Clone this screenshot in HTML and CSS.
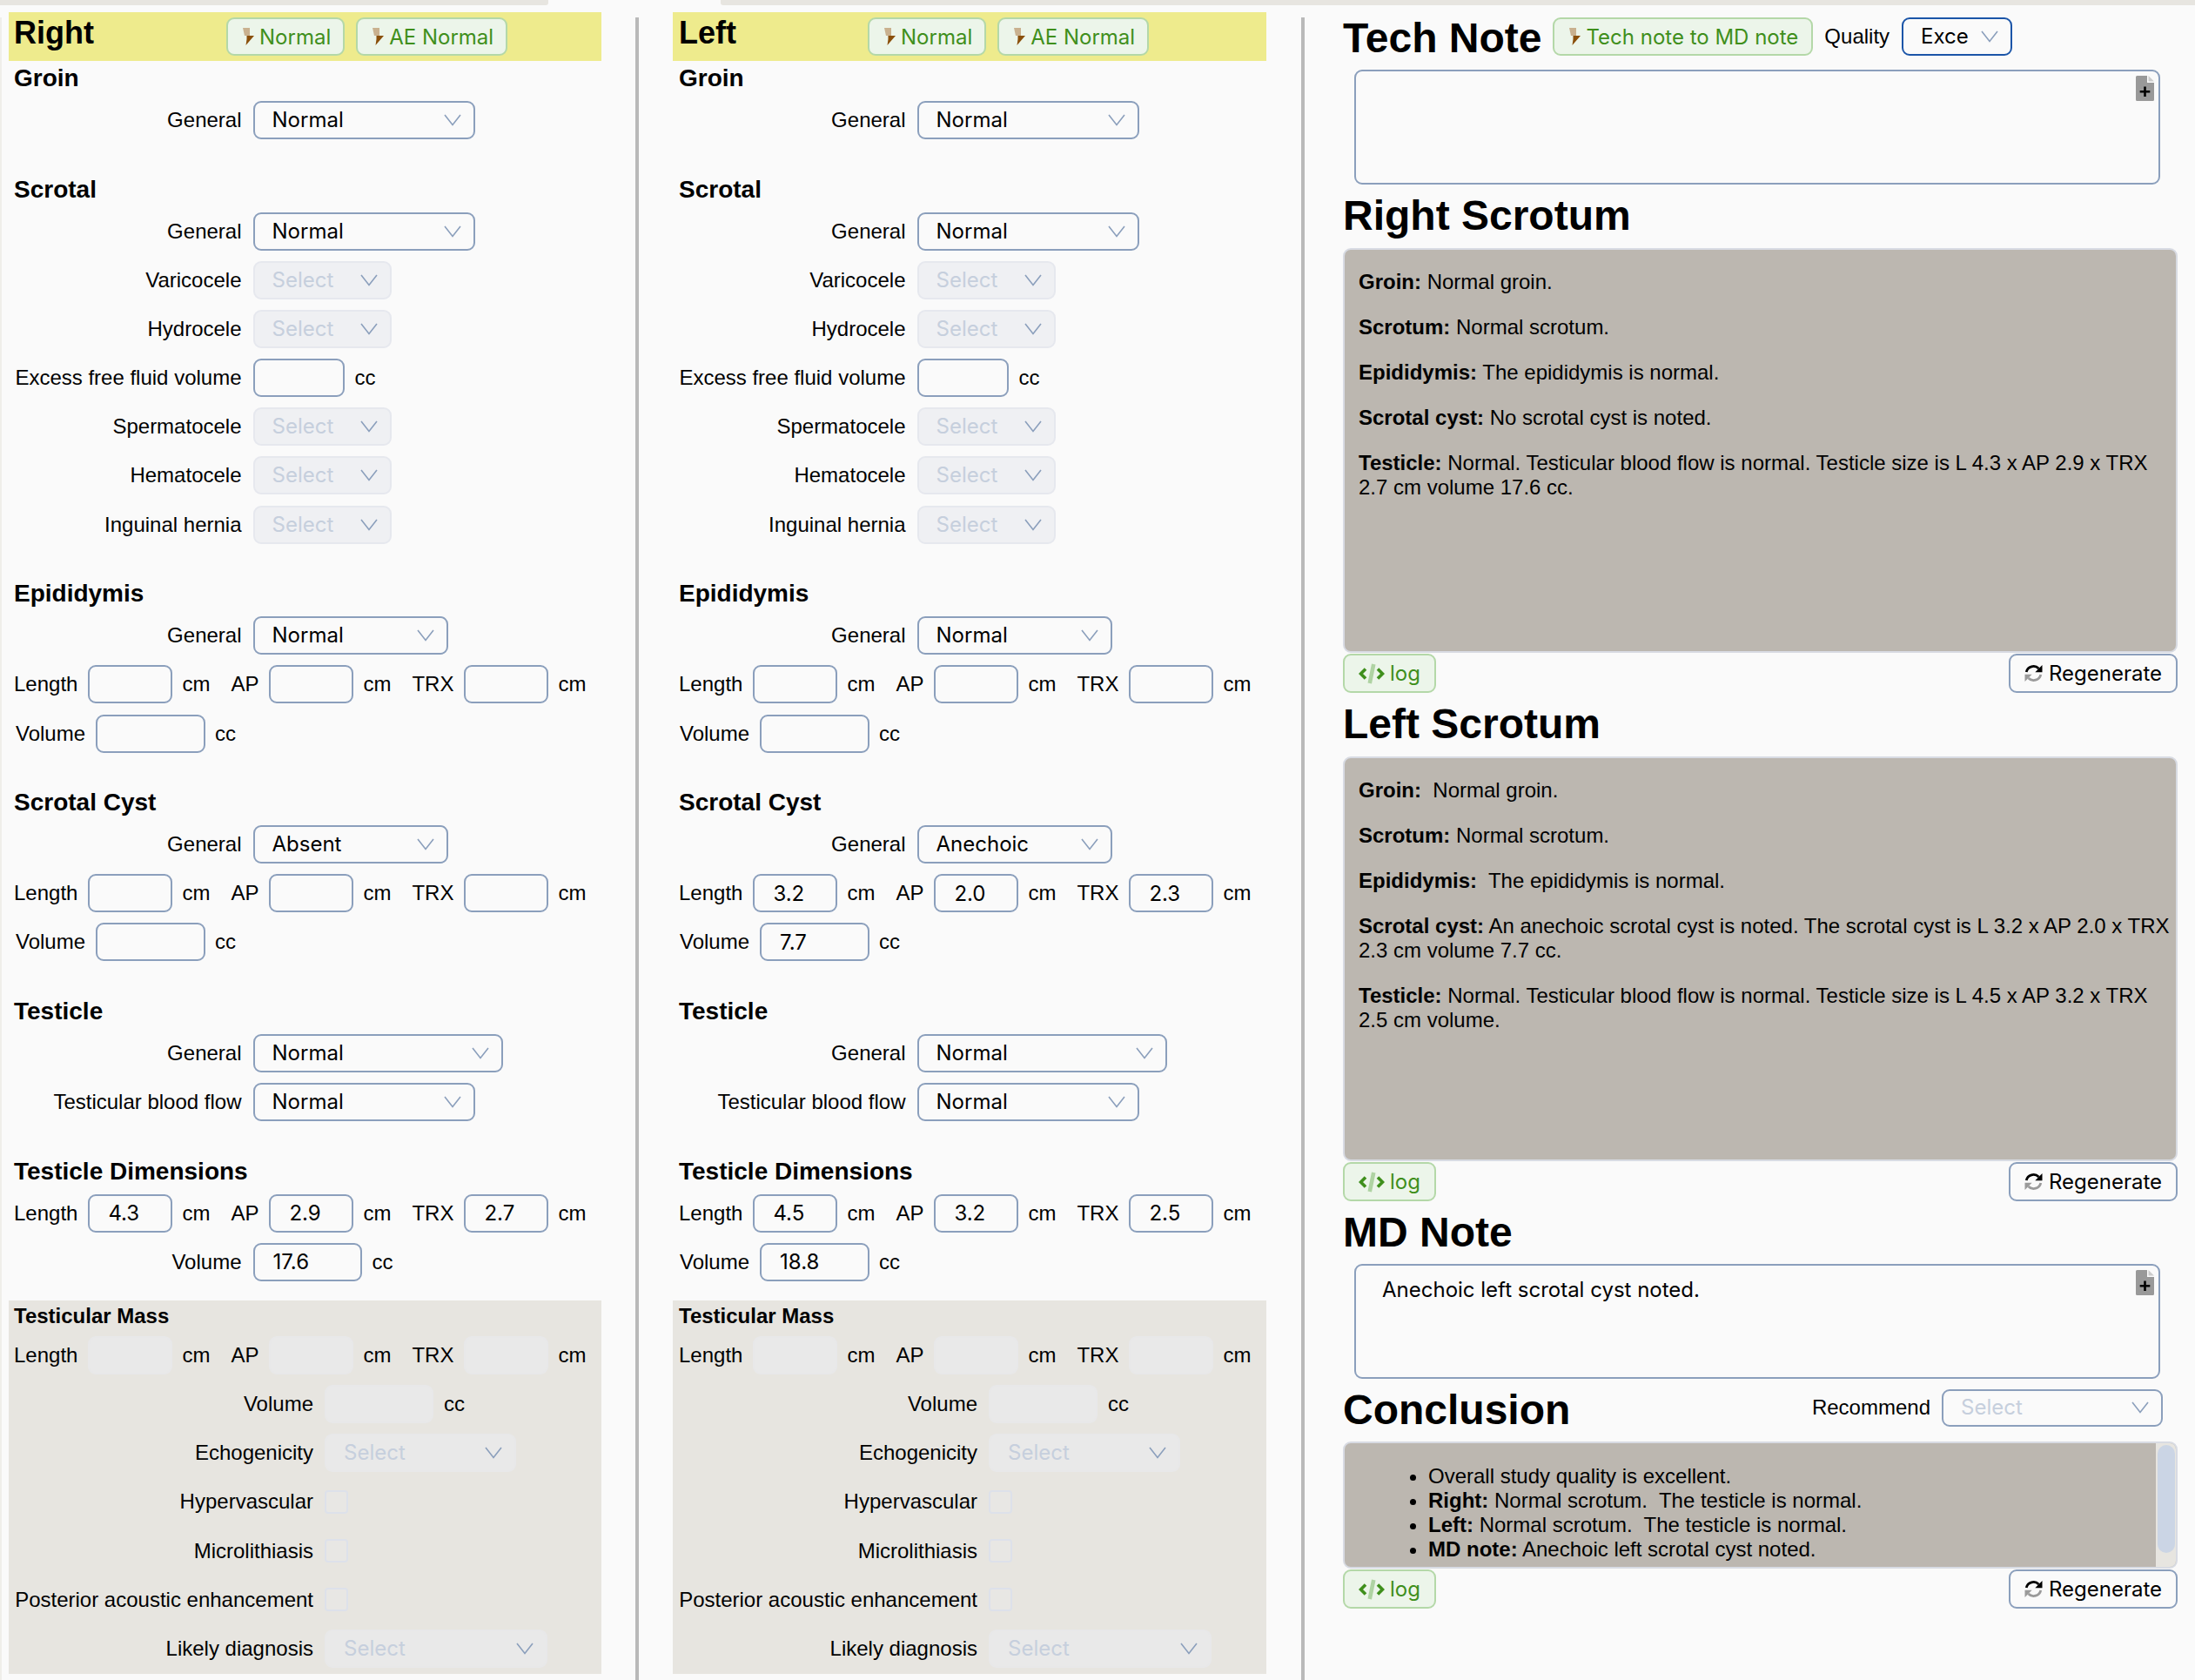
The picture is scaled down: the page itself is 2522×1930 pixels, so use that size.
FILE: index.html
```html
<!DOCTYPE html>
<html lang="en">
<head>
<meta charset="utf-8">
<title>Scrotal ultrasound report</title>
<link rel="stylesheet" href="styles.css">
</head>
<body>
<svg class="defs" width="0" height="0" aria-hidden="true">
  <symbol id="chev" viewBox="0 0 20 14"><path d="M1 1 L10 12.5 L19 1" fill="none" stroke="currentColor" stroke-width="1.6"/></symbol>
  <symbol id="bolt" viewBox="0 0 14 20"><path d="M1 0H9V9H3Z" fill="#c9b18f"/><path d="M5.5 9H14L4.5 20L5.5 13Z" fill="#8a4f0a"/></symbol>
  <symbol id="code" viewBox="0 0 30 24">
    <path d="M12.5 0.5L17 1.5L12.5 23.5L8 22.5Z" transform="translate(2.5 0)" fill="#afd3a3"/>
    <path d="M8 6.5L2.5 12L8 17.5" fill="none" stroke="#3f8f1c" stroke-width="3.6"/>
    <path d="M22 6.5L27.5 12L22 17.5" fill="none" stroke="#3f8f1c" stroke-width="3.6"/>
  </symbol>
  <symbol id="sync" viewBox="0 0 21 21">
    <path d="M2.2 9A8.4 8.4 0 0 1 16.4 5" fill="none" stroke="#000" stroke-width="2.8"/>
    <path d="M20.5 1V9.2H12.3Z" fill="#000"/>
    <path d="M18.8 12A8.4 8.4 0 0 1 4.6 16" fill="none" stroke="#9a9a9a" stroke-width="2.8"/>
    <path d="M0.5 20V11.8H8.7Z" fill="#9a9a9a"/>
  </symbol>
  <symbol id="addfile" viewBox="0 0 21 29">
    <path d="M1.5 0H13V8H21V27.5A1.5 1.5 0 0 1 19.5 29H1.5A1.5 1.5 0 0 1 0 27.5V1.5A1.5 1.5 0 0 1 1.5 0Z" fill="#999"/>
    <path d="M14.5 0L21 6.5H14.5Z" fill="#ccc"/>
    <path d="M10.5 12.5V24M4.7 18.2H16.3" stroke="#000" stroke-width="2.6"/>
  </symbol>
</svg>

<div class="topbar"><div class="strip strip-a"></div><div class="strip strip-b"></div></div>

<main class="page">

<section class="side side-right">
  <header class="side-head">
    <h2 class="side-title">Right</h2>
    <div class="quick">
      <button class="btn btn-green"><svg class="ico-bolt"><use href="#bolt"/></svg>Normal</button>
      <button class="btn btn-green"><svg class="ico-bolt"><use href="#bolt"/></svg>AE Normal</button>
    </div>
  </header>

  <h3 class="sec first">Groin</h3>
  <div class="row"><span class="lab">General</span><div class="sel w255"><span>Normal</span><svg class="chev"><use href="#chev"/></svg></div></div>

  <h3 class="sec">Scrotal</h3>
  <div class="row"><span class="lab">General</span><div class="sel w255"><span>Normal</span><svg class="chev"><use href="#chev"/></svg></div></div>
  <div class="row"><span class="lab">Varicocele</span><div class="sel w158 off"><span>Select</span><svg class="chev"><use href="#chev"/></svg></div></div>
  <div class="row"><span class="lab">Hydrocele</span><div class="sel w158 off"><span>Select</span><svg class="chev"><use href="#chev"/></svg></div></div>
  <div class="row"><span class="lab">Excess free fluid volume</span><input class="inp w104" type="text"><span class="unit">cc</span></div>
  <div class="row"><span class="lab">Spermatocele</span><div class="sel w158 off"><span>Select</span><svg class="chev"><use href="#chev"/></svg></div></div>
  <div class="row"><span class="lab">Hematocele</span><div class="sel w158 off"><span>Select</span><svg class="chev"><use href="#chev"/></svg></div></div>
  <div class="row"><span class="lab">Inguinal hernia</span><div class="sel w158 off"><span>Select</span><svg class="chev"><use href="#chev"/></svg></div></div>

  <h3 class="sec">Epididymis</h3>
  <div class="row"><span class="lab">General</span><div class="sel w223"><span>Normal</span><svg class="chev"><use href="#chev"/></svg></div></div>
  <div class="row dims"><span>Length</span><input class="inp w97" type="text"><span class="unit">cm</span><span>AP</span><input class="inp w97" type="text"><span class="unit">cm</span><span>TRX</span><input class="inp w97" type="text"><span class="unit">cm</span></div>
  <div class="row vol"><span>Volume</span><input class="inp w125" type="text"><span class="unit">cc</span></div>

  <h3 class="sec">Scrotal Cyst</h3>
  <div class="row"><span class="lab">General</span><div class="sel w223"><span>Absent</span><svg class="chev"><use href="#chev"/></svg></div></div>
  <div class="row dims"><span>Length</span><input class="inp w97" type="text"><span class="unit">cm</span><span>AP</span><input class="inp w97" type="text"><span class="unit">cm</span><span>TRX</span><input class="inp w97" type="text"><span class="unit">cm</span></div>
  <div class="row vol"><span>Volume</span><input class="inp w125" type="text"><span class="unit">cc</span></div>

  <h3 class="sec">Testicle</h3>
  <div class="row"><span class="lab">General</span><div class="sel w286"><span>Normal</span><svg class="chev"><use href="#chev"/></svg></div></div>
  <div class="row"><span class="lab">Testicular blood flow</span><div class="sel w255"><span>Normal</span><svg class="chev"><use href="#chev"/></svg></div></div>

  <h3 class="sec">Testicle Dimensions</h3>
  <div class="row dims"><span>Length</span><input class="inp w97" type="text" value="4.3"><span class="unit">cm</span><span>AP</span><input class="inp w97" type="text" value="2.9"><span class="unit">cm</span><span>TRX</span><input class="inp w97" type="text" value="2.7"><span class="unit">cm</span></div>
  <div class="row"><span class="lab">Volume</span><input class="inp w125" type="text" value="17.6"><span class="unit">cc</span></div>

  <div class="mass">
    <h4 class="mass-title">Testicular Mass</h4>
    <div class="row dims"><span>Length</span><input class="inp w97 inp-off" type="text" disabled><span class="unit">cm</span><span>AP</span><input class="inp w97 inp-off" type="text" disabled><span class="unit">cm</span><span>TRX</span><input class="inp w97 inp-off" type="text" disabled><span class="unit">cm</span></div>
    <div class="row"><span class="lab lab-mass">Volume</span><input class="inp w125 inp-off" type="text" disabled><span class="unit">cc</span></div>
    <div class="row"><span class="lab lab-mass">Echogenicity</span><div class="sel w220 off off-mass"><span>Select</span><svg class="chev"><use href="#chev"/></svg></div></div>
    <div class="row"><span class="lab lab-mass">Hypervascular</span><span class="check"></span></div>
    <div class="row"><span class="lab lab-mass">Microlithiasis</span><span class="check"></span></div>
    <div class="row"><span class="lab lab-mass">Posterior acoustic enhancement</span><span class="check"></span></div>
    <div class="row"><span class="lab lab-mass">Likely diagnosis</span><div class="sel w255 off off-mass"><span>Select</span><svg class="chev"><use href="#chev"/></svg></div></div>
  </div>
</section>

<section class="side side-left">
  <header class="side-head">
    <h2 class="side-title">Left</h2>
    <div class="quick">
      <button class="btn btn-green"><svg class="ico-bolt"><use href="#bolt"/></svg>Normal</button>
      <button class="btn btn-green"><svg class="ico-bolt"><use href="#bolt"/></svg>AE Normal</button>
    </div>
  </header>

  <h3 class="sec first">Groin</h3>
  <div class="row"><span class="lab">General</span><div class="sel w255"><span>Normal</span><svg class="chev"><use href="#chev"/></svg></div></div>

  <h3 class="sec">Scrotal</h3>
  <div class="row"><span class="lab">General</span><div class="sel w255"><span>Normal</span><svg class="chev"><use href="#chev"/></svg></div></div>
  <div class="row"><span class="lab">Varicocele</span><div class="sel w158 off"><span>Select</span><svg class="chev"><use href="#chev"/></svg></div></div>
  <div class="row"><span class="lab">Hydrocele</span><div class="sel w158 off"><span>Select</span><svg class="chev"><use href="#chev"/></svg></div></div>
  <div class="row"><span class="lab">Excess free fluid volume</span><input class="inp w104" type="text"><span class="unit">cc</span></div>
  <div class="row"><span class="lab">Spermatocele</span><div class="sel w158 off"><span>Select</span><svg class="chev"><use href="#chev"/></svg></div></div>
  <div class="row"><span class="lab">Hematocele</span><div class="sel w158 off"><span>Select</span><svg class="chev"><use href="#chev"/></svg></div></div>
  <div class="row"><span class="lab">Inguinal hernia</span><div class="sel w158 off"><span>Select</span><svg class="chev"><use href="#chev"/></svg></div></div>

  <h3 class="sec">Epididymis</h3>
  <div class="row"><span class="lab">General</span><div class="sel w223"><span>Normal</span><svg class="chev"><use href="#chev"/></svg></div></div>
  <div class="row dims"><span>Length</span><input class="inp w97" type="text"><span class="unit">cm</span><span>AP</span><input class="inp w97" type="text"><span class="unit">cm</span><span>TRX</span><input class="inp w97" type="text"><span class="unit">cm</span></div>
  <div class="row vol"><span>Volume</span><input class="inp w125" type="text"><span class="unit">cc</span></div>

  <h3 class="sec">Scrotal Cyst</h3>
  <div class="row"><span class="lab">General</span><div class="sel w223"><span>Anechoic</span><svg class="chev"><use href="#chev"/></svg></div></div>
  <div class="row dims"><span>Length</span><input class="inp w97" type="text" value="3.2"><span class="unit">cm</span><span>AP</span><input class="inp w97" type="text" value="2.0"><span class="unit">cm</span><span>TRX</span><input class="inp w97" type="text" value="2.3"><span class="unit">cm</span></div>
  <div class="row vol"><span>Volume</span><input class="inp w125" type="text" value="7.7"><span class="unit">cc</span></div>

  <h3 class="sec">Testicle</h3>
  <div class="row"><span class="lab">General</span><div class="sel w286"><span>Normal</span><svg class="chev"><use href="#chev"/></svg></div></div>
  <div class="row"><span class="lab">Testicular blood flow</span><div class="sel w255"><span>Normal</span><svg class="chev"><use href="#chev"/></svg></div></div>

  <h3 class="sec">Testicle Dimensions</h3>
  <div class="row dims"><span>Length</span><input class="inp w97" type="text" value="4.5"><span class="unit">cm</span><span>AP</span><input class="inp w97" type="text" value="3.2"><span class="unit">cm</span><span>TRX</span><input class="inp w97" type="text" value="2.5"><span class="unit">cm</span></div>
  <div class="row vol"><span>Volume</span><input class="inp w125" type="text" value="18.8"><span class="unit">cc</span></div>

  <div class="mass">
    <h4 class="mass-title">Testicular Mass</h4>
    <div class="row dims"><span>Length</span><input class="inp w97 inp-off" type="text" disabled><span class="unit">cm</span><span>AP</span><input class="inp w97 inp-off" type="text" disabled><span class="unit">cm</span><span>TRX</span><input class="inp w97 inp-off" type="text" disabled><span class="unit">cm</span></div>
    <div class="row"><span class="lab lab-mass">Volume</span><input class="inp w125 inp-off" type="text" disabled><span class="unit">cc</span></div>
    <div class="row"><span class="lab lab-mass">Echogenicity</span><div class="sel w220 off off-mass"><span>Select</span><svg class="chev"><use href="#chev"/></svg></div></div>
    <div class="row"><span class="lab lab-mass">Hypervascular</span><span class="check"></span></div>
    <div class="row"><span class="lab lab-mass">Microlithiasis</span><span class="check"></span></div>
    <div class="row"><span class="lab lab-mass">Posterior acoustic enhancement</span><span class="check"></span></div>
    <div class="row"><span class="lab lab-mass">Likely diagnosis</span><div class="sel w255 off off-mass"><span>Select</span><svg class="chev"><use href="#chev"/></svg></div></div>
  </div>
</section>

<section class="notes">
  <div class="notes-head">
    <h2 class="title title-inline">Tech Note</h2>
    <button class="btn btn-green btn-tech"><svg class="ico-bolt"><use href="#bolt"/></svg>Tech note to MD note</button>
    <span class="quality-label">Quality</span>
    <div class="sel sel-active"><span>Exce</span><svg class="chev"><use href="#chev"/></svg></div>
  </div>
  <div class="ta-wrap ta-tech"><textarea class="ta"></textarea><svg class="ico-add"><use href="#addfile"/></svg></div>

  <h2 class="title">Right Scrotum</h2>
  <article class="report">
    <p><b>Groin:</b> Normal groin.</p>
    <p><b>Scrotum:</b> Normal scrotum.</p>
    <p><b>Epididymis:</b> The epididymis is normal.</p>
    <p><b>Scrotal cyst:</b> No scrotal cyst is noted.</p>
    <p><b>Testicle:</b> Normal. Testicular blood flow is normal. Testicle size is L 4.3 x AP 2.9 x TRX<br>2.7 cm volume 17.6 cc.</p>
  </article>
  <div class="actions">
    <button class="btn btn-green btn-log"><svg class="ico-code"><use href="#code"/></svg>log</button>
    <button class="btn btn-regen"><svg class="ico-sync"><use href="#sync"/></svg>Regenerate</button>
  </div>

  <h2 class="title">Left Scrotum</h2>
  <article class="report">
    <p><b>Groin:</b>&nbsp; Normal groin.</p>
    <p><b>Scrotum:</b> Normal scrotum.</p>
    <p><b>Epididymis:</b>&nbsp; The epididymis is normal.</p>
    <p><b>Scrotal cyst:</b> An anechoic scrotal cyst is noted. The scrotal cyst is L 3.2 x AP 2.0 x TRX<br>2.3 cm volume 7.7 cc.</p>
    <p><b>Testicle:</b> Normal. Testicular blood flow is normal. Testicle size is L 4.5 x AP 3.2 x TRX<br>2.5 cm volume.</p>
  </article>
  <div class="actions">
    <button class="btn btn-green btn-log"><svg class="ico-code"><use href="#code"/></svg>log</button>
    <button class="btn btn-regen"><svg class="ico-sync"><use href="#sync"/></svg>Regenerate</button>
  </div>

  <h2 class="title title-md">MD Note</h2>
  <div class="ta-wrap ta-md"><textarea class="ta">Anechoic left scrotal cyst noted.</textarea><svg class="ico-add"><use href="#addfile"/></svg></div>

  <div class="concl-head">
    <h2 class="title title-inline">Conclusion</h2>
    <div class="recommend"><span>Recommend</span><div class="sel w254 sel-placeholder"><span>Select</span><svg class="chev"><use href="#chev"/></svg></div></div>
  </div>
  <article class="report report-list">
    <ul>
      <li>Overall study quality is excellent.</li>
      <li><b>Right:</b> Normal scrotum.&nbsp; The testicle is normal.</li>
      <li><b>Left:</b> Normal scrotum.&nbsp; The testicle is normal.</li>
      <li><b>MD note:</b> Anechoic left scrotal cyst noted.</li>
    </ul>
    <div class="track"><div class="thumb"></div></div>
  </article>
  <div class="actions">
    <button class="btn btn-green btn-log"><svg class="ico-code"><use href="#code"/></svg>log</button>
    <button class="btn btn-regen"><svg class="ico-sync"><use href="#sync"/></svg>Regenerate</button>
  </div>
</section>

</main>
</body>
</html>
```

FILE: styles.css
```css
* { box-sizing: border-box; }
html, body { margin: 0; padding: 0; }
body {
  width: 2522px;
  height: 1930px;
  overflow: hidden;
  background: #fafafa;
  color: #000;
  font-family: "Liberation Sans", Arial, sans-serif;
  font-size: 24px;
  line-height: 28px;
}
.defs { position: absolute; }
h2, h3, h4, p { margin: 0; }

.topbar { display: flex; justify-content: space-between; height: 6px; }
.strip { height: 6px; background: #e7e5e0; }
.strip-a { width: 630px; border-bottom-right-radius: 3px; }
.strip-b { width: 1694px; border-bottom-left-radius: 3px; }

.page {
  display: grid;
  grid-template-columns: 732px 765px 1023px;
  height: 1910px;
  margin-top: 14px;
  border-left: 2px solid #efeeea;
}

.side { border-right: 4px solid #b9b9b9; }
.side-right { padding: 0 39px 0 8px; }
.side-left { padding: 0 40px 0 39px; }

.side-head {
  display: flex;
  align-items: center;
  height: 56px;
  margin-top: -6px;
  background: #eeeb8d;
  padding-left: 6px;
}
.side-title { width: 244px; font-size: 36px; line-height: 40px; font-weight: 700; margin-top: -8px; }
.quick { display: flex; gap: 13px; margin-top: 0; }
.side-left .side-head { padding-left: 7px; }
.side-left .side-title { width: 217px; }
.side-left .sec, .side-left .mass-title { padding-left: 7px; }
.side-left .dims { padding-left: 7px; }

.btn {
  display: inline-flex;
  align-items: center;
  justify-content: center;
  height: 44px;
  padding: 0;
  border: 2px solid #b4d8a8;
  border-radius: 9px;
  background: #fafafa;
  font-family: Inter, sans-serif;
  font-size: 24px;
  color: #000;
}
.btn-green { background: #ecf5ea; color: #3f8f1c; padding: 0 14px 0 16px; }
.btn-tech { margin-left: 13px; padding: 0 15px 0 16px; }
.btn-log { width: 107px; height: 45px; padding: 0; }
.btn-regen { width: 194px; height: 45px; border-color: #8b9fbc; }
.ico-bolt { width: 14px; height: 20px; margin-right: 6px; flex: none; }
.ico-code { width: 30px; height: 24px; margin-right: 6px; flex: none; }
.ico-sync { width: 21px; height: 21px; margin-right: 7px; flex: none; }

.sec {
  height: 32px;
  margin-top: 41.5px;
  padding-left: 6px;
  font-size: 28px;
  line-height: 32px;
  font-weight: 700;
}
.sec.first { margin-top: 4px; }
.sec + .row { margin-top: 10px; }

.row {
  display: flex;
  align-items: center;
  gap: 13px;
  height: 44px;
  margin-top: 12.2px;
}
.lab { width: 267.5px; text-align: right; flex: none; white-space: nowrap; }
.lab-mass { width: 350px; }
.unit { margin-left: -1px; }

.dims { padding-left: 6px; gap: 12px; }
.dims .unit { margin-left: -1px; margin-right: 12px; }
.vol { padding-left: 8px; gap: 12px; }
.vol .inp { width: 126px; }

.sel {
  display: flex;
  align-items: center;
  justify-content: space-between;
  height: 44px;
  padding: 0 14px 0 20px;
  border: 2px solid #8b9fbc;
  border-radius: 9px;
  background: #fafafa;
  font-family: Inter, sans-serif;
  font-size: 24px;
  flex: none;
}
.chev { width: 20px; height: 14px; color: #8b9fbc; flex: none; }
.w158 { width: 159px; }
.w220 { width: 220px; }
.w223 { width: 224px; }
.w254 { width: 254px; }
.w255 { width: 255.5px; }
.w286 { width: 287px; }
.off { background: #eff0f3; border-color: #e6e8ee; color: #c6cfdd; }
.off-mass { background: #e9e9e9; border-color: #e8e8e9; }
.sel-placeholder { color: #c6cfdd; }
.sel-active { width: 127px; border-color: #1b55a8; }

.inp {
  height: 44px;
  padding: 0 0 0 21px;
  border: 2px solid #8b9fbc;
  border-radius: 9px;
  background: #fafafa;
  font-family: Inter, sans-serif;
  font-size: 24px;
  color: #000;
  flex: none;
}
.w97 { width: 97px; }
.w104 { width: 105px; }
.w125 { width: 125px; }
.inp-off { background: #e9e9e9; border-color: #e8e8e9; }

.mass {
  height: 429px;
  margin-top: 22px;
  background: #e7e5e0;
  padding-top: 2px;
}
.mass-title { height: 32px; padding-left: 6px; font-size: 24px; line-height: 32px; font-weight: 700; }
.mass-title + .row { margin-top: 7px; }
.check {
  width: 27px;
  height: 27px;
  border: 2px solid #dde1ea;
  border-radius: 4px;
  background: #e8e7e4;
}

.notes { padding: 0 20px 0 44px; }
.notes-head { display: flex; align-items: center; height: 44px; }
.title { height: 56px; margin-top: 8px; margin-bottom: 9px; font-size: 48px; line-height: 56px; font-weight: 700; }
.title-inline { margin: 0; }
.notes-head .title-inline { padding-top: 2px; }
.title-md { margin-bottom: 8px; }
.quality-label { margin: 0 14px 0 13px; }

.ta-wrap { position: relative; margin: 16px 20px 0 13px; }
.ta-tech { height: 132px; }
.ta-md { height: 132px; margin-top: 0; }
.ta {
  display: block;
  width: 100%;
  height: 100%;
  padding: 14px 30px;
  border: 2px solid #8b9fbc;
  border-radius: 9px;
  background: #fafafa;
  font-family: Inter, sans-serif;
  font-size: 24px;
  line-height: 28px;
  color: #000;
  resize: none;
  outline: none;
}
.ico-add { position: absolute; top: 7px; right: 7px; width: 21px; height: 29px; }

.report {
  height: 465px;
  padding: 23px 4px 0 16px;
  border: 2px solid #d8dbe3;
  border-radius: 9px;
  background: #bcb7b0;
}
.report p { margin-bottom: 24px; }

.actions { display: flex; justify-content: space-between; margin-top: 1px; }

.concl-head { display: flex; align-items: center; justify-content: space-between; height: 56px; margin: 8px 0; }
.recommend { display: flex; align-items: center; gap: 13px; margin-right: 17px; }
.recommend .sel { height: 43px; margin-top: -6px; }
.recommend > span { margin-top: -6px; }

.report-list {
  display: flex;
  justify-content: space-between;
  height: 146px;
  padding: 0;
  overflow: hidden;
}
.report-list ul { margin: 24px 0 0; padding: 0 0 0 96px; }
.track { width: 23px; background: #e7e5e0; padding: 2px 1px 0 2px; }
.thumb { height: 124px; border-radius: 10px; background: #cbd5e5; }
```
